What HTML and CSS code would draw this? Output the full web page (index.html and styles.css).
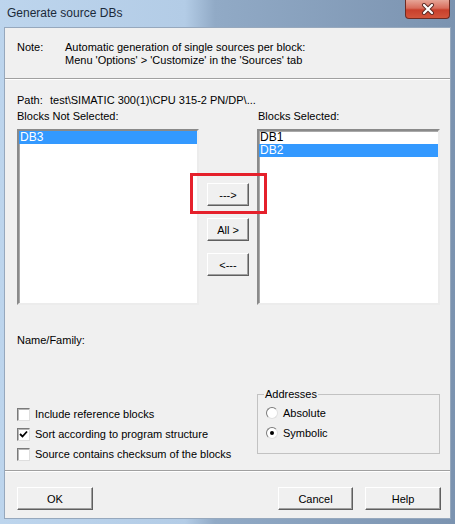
FILE: index.html
```html
<!DOCTYPE html>
<html lang="en">
<head>
  <meta charset="utf-8">
  <title>Generate source DBs</title>
  <link rel="stylesheet" href="styles.css">
</head>
<body>

  <div class="window">

    <div class="titlebar">
      <span class="title">Generate source DBs</span>
      <div class="close">
        <svg width="14" height="12" viewBox="0 0 14 12">
          <path d="M3 2 L11 10 M11 2 L3 10" stroke="#5a2a24" stroke-width="4" stroke-linecap="round"/>
          <path d="M3 2 L11 10 M11 2 L3 10" stroke="#fff" stroke-width="2.2" stroke-linecap="round"/>
        </svg>
      </div>
    </div>

    <div class="client">

      <div class="note">
        <span class="note-label">Note:</span>
        <span>Automatic generation of single sources per block:<br>Menu 'Options' &gt; 'Customize' in the 'Sources' tab</span>
      </div>

      <div class="sep"></div>

      <div class="main">

        <div class="path"><span class="path-label">Path:</span>test\SIMATIC 300(1)\CPU 315-2 PN/DP\...</div>

        <div class="lists">
          <div class="list-label">Blocks Not Selected:</div>
          <div></div>
          <div class="list-label right">Blocks Selected:</div>

          <div class="listbox">
            <div class="item selected">DB3</div>
          </div>

          <div class="mover">
            <span class="marked">
              <button class="btn small">---&gt;</button>
              <span class="highlight"></span>
            </span>
            <button class="btn small">All &gt;</button>
            <button class="btn small">&lt;---</button>
          </div>

          <div class="listbox">
            <div class="item">DB1</div>
            <div class="item selected">DB2</div>
          </div>
        </div>

        <div class="name">Name/Family:</div>

        <div class="options">
          <div class="checks">
            <label class="row"><span class="checkbox"></span>Include reference blocks</label>
            <label class="row"><span class="checkbox">
              <svg width="9" height="9" viewBox="0 0 9 9"><path d="M1 4 L3.5 6.5 L8 1.5" fill="none" stroke="#000" stroke-width="1.8"/></svg>
            </span>Sort according to program structure</label>
            <label class="row"><span class="checkbox"></span>Source contains checksum of the blocks</label>
          </div>

          <fieldset class="group">
            <legend>Addresses</legend>
            <div class="radios">
              <label class="row"><span class="radio"></span>Absolute</label>
              <label class="row"><span class="radio on"></span>Symbolic</label>
            </div>
          </fieldset>
        </div>

      </div>

      <div class="sep"></div>

      <div class="footer">
        <button class="btn wide">OK</button>
        <button class="btn cancel">Cancel</button>
        <button class="btn wide">Help</button>
      </div>

    </div>

  </div>

</body>
</html>
```

FILE: styles.css
```css
body{
  margin:0;
  background:#8da7c4;
  font-family:"Liberation Sans", Arial, sans-serif;
  font-size:11px;
  color:#000;
}

.window{
  width:455px;
  height:524px;
  overflow:hidden;
  background:linear-gradient(to right, #bdd5ed 0, #b3cce6 185px, #91aac6 215px, #7b93b0 100%);
}

/* title bar */

.titlebar{
  height:27px;
  display:flex;
  align-items:flex-start;
  justify-content:space-between;
}

.title{
  padding:6px 0 0 7px;
  font-size:12px;
  line-height:14px;
  color:#1b2a3a;
}

.close{
  width:45px;
  height:19px;
  margin-right:5px;
  box-sizing:border-box;
  border:1px solid #6e2b22;
  border-top:none;
  border-radius:0 0 4px 4px;
  background:linear-gradient(#e6a597 0, #d86d5c 45%, #c8402c 55%, #d2553c 100%);
  display:flex;
  align-items:center;
  justify-content:center;
}

/* client area */

.client{
  margin:0 4px;
  height:492px;
  box-sizing:border-box;
  border:1px solid #96a8bd;
  background:#f0f0f0;
}

.sep{
  border-top:1px solid #a0a0a0;
  border-bottom:1px solid #fff;
}

.note{
  height:50px;
  box-sizing:border-box;
  padding:13px 12px 0;
  display:flex;
  line-height:13px;
}

.note-label{
  width:48px;
  flex:none;
}

.main{
  height:390px;
  box-sizing:border-box;
  padding:14px 10px 0 12px;
}

.path{
  line-height:13px;
}

.path-label{
  display:inline-block;
  width:33px;
}

.lists{
  margin-top:3px;
  display:grid;
  grid-template-columns:182px 58px 183px;
  grid-template-rows:13px 176px;
  row-gap:6px;
}

.list-label{
  line-height:13px;
}

.list-label.right{
  padding-left:1px;
}

.listbox{
  box-sizing:border-box;
  border:2px solid;
  border-color:#8a8a8a #ececec #ececec #8a8a8a;
  box-shadow:inset 1px 1px #a9a9a9;
  background:#fff;
  font-size:12px;
}

.item{
  height:13px;
  line-height:13px;
  padding-left:1px;
}

.item.selected{
  background:#3399ff;
  color:#fff;
}

.mover{
  padding-top:54px;
  display:flex;
  flex-direction:column;
  align-items:center;
  gap:12px;
}

.marked{
  position:relative;
  display:flex;
}

.highlight{
  position:absolute;
  top:-10px;
  left:-17px;
  right:-18px;
  bottom:-8px;
  border:3px solid #e5202b;
  z-index:2;
}

/* buttons */

.btn{
  font-family:inherit;
  font-size:11px;
  color:#000;
  height:23px;
  padding:0;
  background:#f0f0f0;
  border:1px solid;
  border-color:#fff #5f5f5f #5f5f5f #fff;
  box-shadow:inset -1px -1px #a0a0a0;
}

.btn.small{
  width:42px;
}

.btn.wide{
  width:76px;
}

.btn.cancel{
  width:75px;
  margin-left:auto;
}

.name{
  margin-top:29px;
  line-height:13px;
}

/* options */

.options{
  margin-top:41px;
  display:flex;
}

.checks{
  width:240px;
  flex:none;
  padding-top:16px;
}

.row{
  height:20px;
  display:flex;
  align-items:center;
}

.checkbox{
  width:13px;
  height:13px;
  box-sizing:border-box;
  margin-right:5px;
  border:1px solid;
  border-color:#7a7a7a #dedede #dedede #7a7a7a;
  box-shadow:inset 1px 1px #b5b5b5;
  background:#fff;
  display:flex;
  align-items:center;
  justify-content:center;
}

.group{
  width:183px;
  height:66px;
  flex:none;
  box-sizing:border-box;
  margin:0;
  padding:0 0 0 8px;
  border:1px solid #c2c2c2;
}

.group legend{
  margin-left:-2px;
  padding:0 1px;
  line-height:13px;
}

.radios{
  padding-top:2px;
}

.radio{
  width:12px;
  height:12px;
  box-sizing:border-box;
  margin-right:5px;
  border-radius:50%;
  border:1px solid;
  border-color:#7a7a7a #e0e0e0 #e0e0e0 #7a7a7a;
  background:#fff;
  display:flex;
  align-items:center;
  justify-content:center;
}

.radio.on::after{
  content:"";
  width:4px;
  height:4px;
  border-radius:50%;
  background:#000;
}

/* footer */

.footer{
  padding:15px 9px 0 12px;
  display:flex;
  gap:12px;
}
```
